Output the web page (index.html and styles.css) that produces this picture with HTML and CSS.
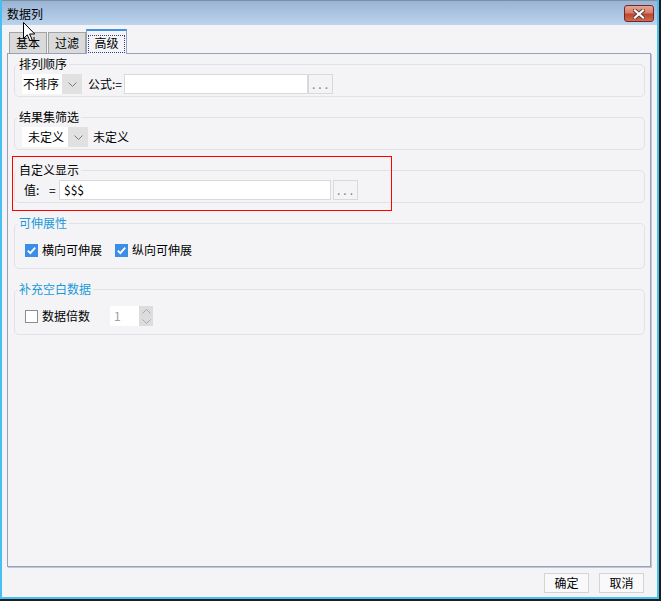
FILE: index.html
```html
<!DOCTYPE html>
<html lang="zh-CN">
<head>
<meta charset="utf-8">
<title>数据列</title>
<link rel="stylesheet" href="styles.css">
</head>
<body>
<div class="window">
  <div class="titlebar">
    <span class="title">数据列</span>
    <div class="close">
      <svg width="12" height="10" viewBox="0 0 12 10">
        <path d="M2 1.5 L10 8.5 M10 1.5 L2 8.5" stroke="#5a3a36" stroke-width="4" stroke-linecap="square" fill="none"/>
        <path d="M2 1.5 L10 8.5 M10 1.5 L2 8.5" stroke="#ffffff" stroke-width="2.2" stroke-linecap="square" fill="none"/>
      </svg>
    </div>
  </div>
  <div class="content">
    <div class="tabs">
      <div class="tab">基本</div>
      <div class="tab">过滤</div>
      <div class="tab active"><span class="focus">高级</span></div>
    </div>
    <div class="panel">
      <fieldset class="group">
        <legend>排列顺序</legend>
        <div class="row pad-s">
          <div class="combo"><span class="combo-text w40">不排序</span><span class="combo-arrow"><svg width="9" height="5" viewBox="0 0 9 5"><path d="M0.5 0.5 L4.5 4.5 L8.5 0.5" stroke="#7a7a7a" fill="none"/></svg></span></div>
          <span class="lbl formula">公式:=</span>
          <span class="field w184"></span>
          <span class="dots">...</span>
        </div>
      </fieldset>
      <fieldset class="group">
        <legend>结果集筛选</legend>
        <div class="row pad-s">
          <div class="combo"><span class="combo-text w46">未定义</span><span class="combo-arrow"><svg width="9" height="5" viewBox="0 0 9 5"><path d="M0.5 0.5 L4.5 4.5 L8.5 0.5" stroke="#7a7a7a" fill="none"/></svg></span></div>
          <span class="lbl undef">未定义</span>
        </div>
      </fieldset>
      <fieldset class="group">
        <legend>自定义显示</legend>
        <div class="row pad-s">
          <span class="lbl val">值:</span>
          <span class="lbl eq">=</span>
          <span class="field w272"><span class="field-text">$$$</span></span>
          <span class="dots gap2">...</span>
        </div>
      </fieldset>
      <fieldset class="group">
        <legend class="blue">可伸展性</legend>
        <div class="row pad-l">
          <span class="check on"><svg width="13" height="13" viewBox="0 0 13 13"><rect x="0" y="0" width="13" height="13" fill="#3b8ee6"/><path d="M2.8 6.6 L5.3 9.2 L10.2 3.6" stroke="#ffffff" stroke-width="1.8" fill="none"/></svg></span>
          <span class="lbl chk w60">横向可伸展</span>
          <span class="check on second"><svg width="13" height="13" viewBox="0 0 13 13"><rect x="0" y="0" width="13" height="13" fill="#3b8ee6"/><path d="M2.8 6.6 L5.3 9.2 L10.2 3.6" stroke="#ffffff" stroke-width="1.8" fill="none"/></svg></span>
          <span class="lbl chk w60">纵向可伸展</span>
        </div>
      </fieldset>
      <fieldset class="group">
        <legend class="blue">补充空白数据</legend>
        <div class="row pad-l">
          <span class="check off"></span>
          <span class="lbl chk w48">数据倍数</span>
          <div class="spin">
            <span class="spin-text">1</span>
            <span class="spin-arrows">
              <svg width="9" height="5" viewBox="0 0 9 5"><path d="M0.5 4.5 L4.5 0.5 L8.5 4.5" stroke="#a9a9a9" fill="none"/></svg>
              <svg width="9" height="5" viewBox="0 0 9 5"><path d="M0.5 0.5 L4.5 4.5 L8.5 0.5" stroke="#a9a9a9" fill="none"/></svg>
            </span>
          </div>
        </div>
      </fieldset>
      <div class="annot"></div>
    </div>
    <div class="footer">
      <button class="btn">确定</button>
      <button class="btn">取消</button>
    </div>
  </div>
  <svg class="cursor" width="14" height="21" viewBox="0 0 14 21">
    <path d="M0.5 0.5 L0.5 16.5 L4.3 12.8 L6.9 18.8 L9.2 17.8 L6.6 12 L11.8 12 Z" fill="#ffffff" stroke="#000000" stroke-width="1" stroke-linejoin="miter"/>
  </svg>
</div>
</body>
</html>
```
FILE: styles.css
```css
* { box-sizing: border-box; }
html, body {
  margin: 0;
  padding: 0;
  background: #1d1d1d;
  width: 661px;
  height: 601px;
  overflow: hidden;
}
body {
  font-family: "Noto Sans CJK SC", "Noto Sans", sans-serif;
  font-size: 12px;
  color: #000;
}
.window {
  position: relative;
  width: 659px;
  height: 599px;
  background: #f4f4f7;
  border-left: 2px solid #48bff0;
  border-right: 2px solid #48bff0;
  border-bottom: 2px solid #48bff0;
  display: flex;
  flex-direction: column;
}
.titlebar {
  height: 25px;
  flex: none;
  display: flex;
  justify-content: space-between;
  align-items: flex-start;
  padding: 5px 3px 0 5px;
  background: linear-gradient(#9ab4d5, #bbd3ec);
  border-top: 1px solid #7d8ea6;
}
.title {
  line-height: 14px;
  margin-top: 1px;
}
.close {
  width: 30px;
  height: 17px;
  margin-top: -1px;
  border: 1px solid #6f2b22;
  border-radius: 3px;
  background: linear-gradient(#e6a496 0%, #d6806d 45%, #bf4630 55%, #cf6a52 100%);
  display: flex;
  align-items: center;
  justify-content: center;
}
.content {
  flex: 1;
  display: flex;
  flex-direction: column;
  padding: 4px 6px 0 5px;
}
.tabs {
  height: 24px;
  display: flex;
  align-items: flex-end;
  padding-left: 2px;
  position: relative;
  z-index: 1;
}
.tab {
  height: 21px;
  border: 1px solid #a3a3a3;
  border-bottom: 0;
  background: #dadada;
  line-height: 19px;
  padding: 0 6px;
  margin-right: 1px;
}
.tab.active {
  height: 25px;
  margin-bottom: -1px;
  margin-left: -1px;
  background: #f4f4f7;
  border-color: #9aa5bd;
  border-top: 2px solid #3f90e0;
  padding: 4px 1px 0;
}
.focus {
  display: block;
  height: 18px;
  width: 37px;
  border: 1px dotted #33408a;
  text-align: center;
  line-height: 13px;
}
.panel {
  position: relative;
  height: 514px;
  flex: none;
  border: 1px solid #97a2ba;
  box-shadow: 1px 1px 0 #bfc6d5;
  padding: 3px 5px 0 6px;
}
.group {
  margin: 13px 0 0;
  padding: 0;
  border: 1px solid #e2e2e6;
  border-radius: 5px;
  min-width: 0;
}
.group:first-child { margin-top: 0; }
legend {
  line-height: 14px;
  padding: 0 2px;
  margin-left: 2px;
}
legend.blue { color: #1a9ad8; }
.row {
  display: flex;
  align-items: center;
  height: 20px;
  padding-left: 7px;
  box-sizing: content-box;
}
.pad-s { padding-top: 3px; padding-bottom: 2px; }
.pad-l { padding-top: 10px; padding-bottom: 8px; }
.combo {
  display: flex;
  height: 20px;
}
.combo-text {
  background: #fff;
  line-height: 20px;
  padding-left: 1px;
}
.w40 { width: 40px; }
.w46 { width: 46px; padding-left: 6px; }
.combo-arrow {
  width: 20px;
  background: #e1e1e1;
  display: flex;
  align-items: center;
  justify-content: center;
}
.lbl { line-height: 20px; white-space: nowrap; flex: none; }
.formula { width: 36px; margin-left: 6px; }
.undef { margin-left: 5px; }
.val { margin-left: 2px; width: 25px; }
.eq { width: 10px; }
.field {
  height: 20px;
  border: 1px solid #d9d9d9;
  background: #fff;
  display: flex;
  align-items: center;
  flex: none;
}
.field-text { padding-left: 4px; line-height: 18px; }
.w184 { width: 184px; }
.w272 { width: 272px; }
.dots {
  width: 25px;
  height: 20px;
  flex: none;
  border: 1px solid #d9d9d9;
  background: #f4f4f7;
  color: #808080;
  letter-spacing: 3px;
  padding-left: 3px;
  line-height: 17px;
}
.gap2 { margin-left: 2px; }
.check {
  width: 13px;
  height: 13px;
  margin-left: 3px;
  display: block;
  flex: none;
}
.check svg { display: block; }
.check.off {
  border: 1px solid #8c8c8c;
  background: #fff;
}
.check.second { margin-left: 13px; }
.chk { margin-left: 4px; }
.w60 { width: 60px; }
.w48 { width: 48px; }
.spin {
  display: flex;
  height: 20px;
  margin-left: 20px;
}
.spin-text {
  width: 29px;
  background: #fff;
  color: #a0a0a0;
  padding-left: 4px;
  line-height: 20px;
}
.spin-arrows {
  width: 14px;
  background: #dcdcdc;
  display: flex;
  flex-direction: column;
  align-items: center;
  justify-content: center;
  gap: 5px;
}
.spin-arrows svg { display: block; }
.annot {
  position: absolute;
  left: 4px;
  top: 102px;
  width: 380px;
  height: 55px;
  border: 1px solid #ff0000;
}
.footer {
  display: flex;
  justify-content: flex-end;
  gap: 10px;
  margin-top: 6px;
  padding-right: 7px;
}
.btn {
  width: 45px;
  height: 20px;
  border: 1px solid #d4d4d4;
  background: #f9f9fb;
  font-family: inherit;
  font-size: 12px;
  padding: 0;
  line-height: 18px;
  color: #000;
}
.cursor {
  position: absolute;
  left: 21px;
  top: 22px;
  z-index: 5;
}
```
